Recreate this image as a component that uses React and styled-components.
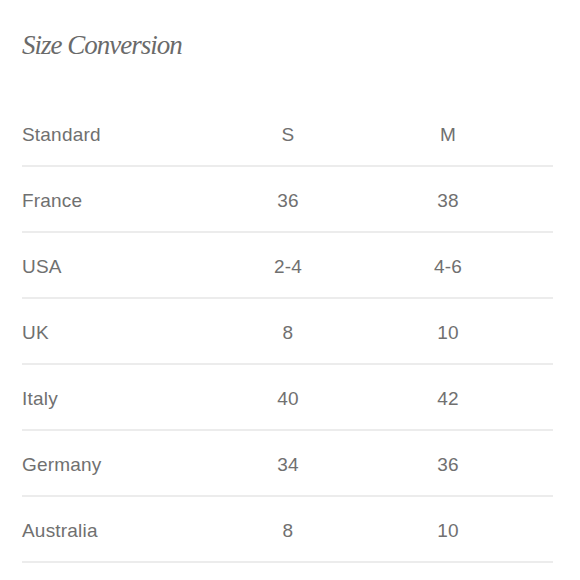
import React from 'react';
import styled, { createGlobalStyle } from 'styled-components';

const GlobalStyle = createGlobalStyle`
  html, body {
    margin: 0;
    padding: 0;
    background: #ffffff;
  }
`;

const rows = [
  { label: 'Standard', s: 'S', m: 'M' },
  { label: 'France', s: '36', m: '38' },
  { label: 'USA', s: '2-4', m: '4-6' },
  { label: 'UK', s: '8', m: '10' },
  { label: 'Italy', s: '40', m: '42' },
  { label: 'Germany', s: '34', m: '36' },
  { label: 'Australia', s: '8', m: '10' },
];

const Page = styled.div`
  width: 580px;
  height: 580px;
  box-sizing: border-box;
  padding: 25px 27px 0 22px;
  overflow: hidden;
`;

const Title = styled.h2`
  margin: 0;
  height: 76px;
  font-family: 'Liberation Serif', serif;
  font-style: italic;
  font-weight: 400;
  font-size: 27px;
  line-height: 40px;
  letter-spacing: -1px;
  color: #6a6a6a;
`;

const Table = styled.div`
  display: flex;
  flex-direction: column;
`;

const Row = styled.div`
  display: grid;
  grid-template-columns: 186px 160px 160px 1fr;
  align-items: center;
  height: 66px;
  box-sizing: border-box;
  border-bottom: 2px solid #ececec;
  padding-top: 4px;
`;

const Cell = styled.div`
  font-family: 'Liberation Sans', Arial, sans-serif;
  font-size: 19px;
  color: #707070;
  letter-spacing: 0.2px;
  text-align: ${(props) => (props.center ? 'center' : 'left')};
`;

const App = () => {
  return (
    <>
      <GlobalStyle />
      <Page>
        <Title>Size Conversion</Title>
        <Table>
          {rows.map((row) => (
            <Row key={row.label}>
              <Cell>{row.label}</Cell>
              <Cell center>{row.s}</Cell>
              <Cell center>{row.m}</Cell>
              <span />
            </Row>
          ))}
        </Table>
      </Page>
    </>
  );
};

export default App;
